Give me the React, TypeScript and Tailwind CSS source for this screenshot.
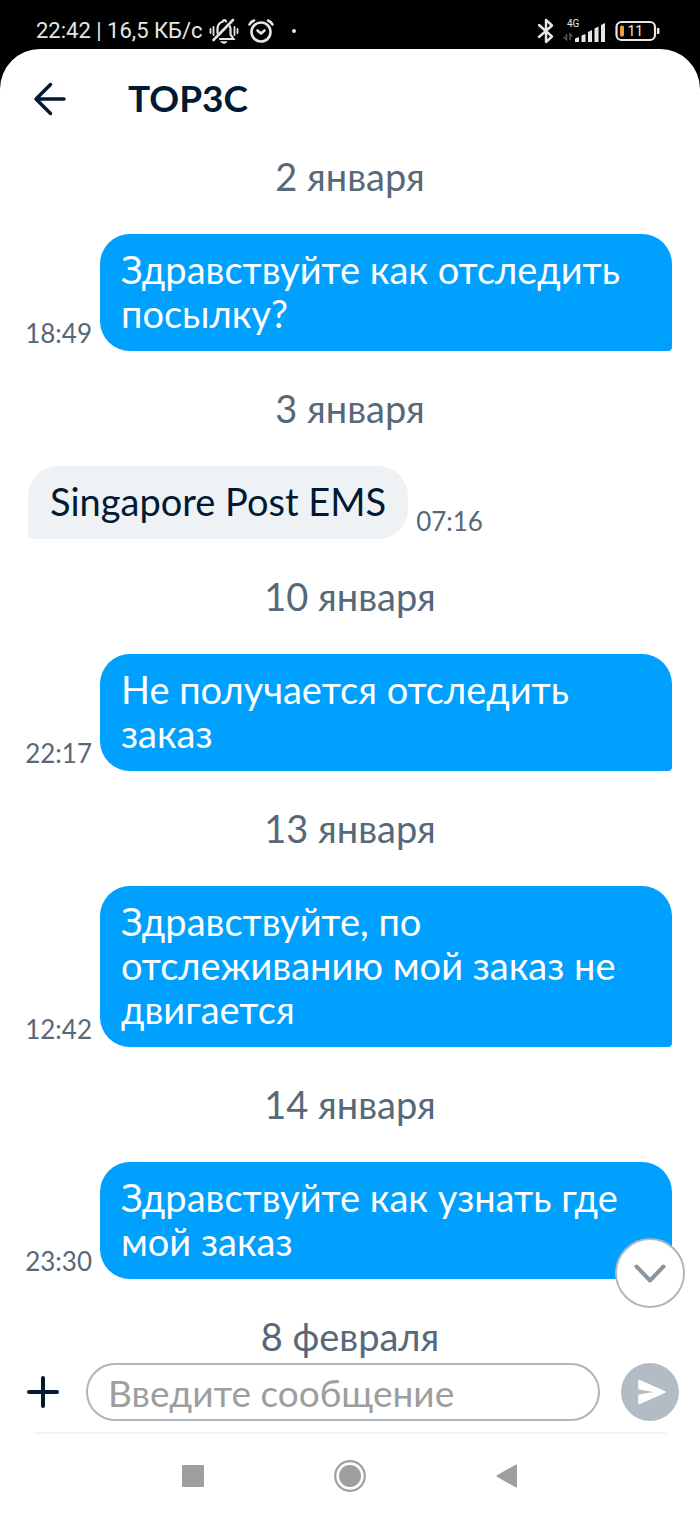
import React from 'react';

type Message = {
  date: string;
  time: string;
  text: string;
  mine: boolean;
};

const messages: Message[] = [
  { date: '2 января', time: '18:49', text: 'Здравствуйте как отследить\nпосылку?', mine: true },
  { date: '3 января', time: '07:16', text: 'Singapore Post EMS', mine: false },
  { date: '10 января', time: '22:17', text: 'Не получается отследить\nзаказ', mine: true },
  { date: '13 января', time: '12:42', text: 'Здравствуйте, по\nотслеживанию мой заказ не\nдвигается', mine: true },
  { date: '14 января', time: '23:30', text: 'Здравствуйте как узнать где\nмой заказ', mine: true },
];

const StatusBar: React.FC = () => (
  <div className="flex h-[49px] items-center justify-between pt-[13px] pr-[40px] pl-[36px] font-['Roboto',sans-serif] text-[#e6e6e6]">
    <div className="flex items-center">
      <span className="text-[22px] leading-7">22:42 | 16,5 КБ/с</span>
      {/* Muted bell */}
      <svg className="ml-1.5 h-7 w-[30px]" viewBox="0 0 30 28" fill="none" stroke="currentColor" strokeWidth="2.200" strokeLinecap="round">
        <path d="M1.500 12v4M4.500 10v8M25.500 10v8M28.500 12v4" strokeWidth="1.800" />
        <path d="M8.500 16v-4c0-3.500 2-6.300 5-7.200C14 2.500 16.500 2.500 17 4.500M21 9.500c.4 1 .5 2.300.5 3.500v4.500l3 4.500H11" />
        <path d="M24 3 4.500 23" strokeWidth="2.600" />
        <path d="M12 24.500h6c-.5 1.500-1.600 2-3 2s-2.500-.5-3-2z" fill="currentColor" strokeWidth="0.500" />
      </svg>
      {/* Alarm */}
      <svg className="ml-2 h-7 w-7" viewBox="0 0 28 28" fill="none" stroke="currentColor" strokeWidth="2.600" strokeLinecap="round" strokeLinejoin="round">
        <circle cx="14" cy="15" r="9.500" />
        <path d="m10.500 13.500 3.500 3 3.500-3" />
        <path d="M2.500 7.500c1-2 2.500-3.200 4.500-4M25.500 7.500c-1-2-2.500-3.200-4.500-4" />
      </svg>
      <span className="ml-[17px] h-1 w-1 rounded-full bg-current" />
    </div>
    <div className="flex items-center">
      {/* Bluetooth */}
      <svg className="h-7 w-[18px]" viewBox="0 0 18 28" fill="none" stroke="currentColor" strokeWidth="2.400" strokeLinejoin="round" strokeLinecap="round">
        <path d="m2 8 13 11.500L9 25V3l6 5.500L2 20" />
      </svg>
      <div className="ml-2 flex h-7 items-end">
        <svg className="mb-0.5 h-7 w-[46px]" viewBox="0 0 46 28" fill="currentColor">
          <text x="4" y="12" fontSize="10" >4G</text>
          <path d="M3.500 19v5.500L.8 22M7 25v-6l2.500 2.500" fill="none" stroke="#5a5a5a" strokeWidth="1.500" />
          <path d="M12 23.500 16 22v5h-4zM18.500 20.500l4-1.500v8h-4zM25 17l4-2v12h-4zM31.500 13.500l4-2V27h-4zM38 10l4-2v19h-4z" />
        </svg>
      </div>
      {/* Battery */}
      <svg className="ml-1.5 h-7 w-[45px]" viewBox="0 0 45 28">
        <rect x="1.500" y="5" width="38.500" height="18" rx="5" fill="none" stroke="currentColor" strokeWidth="2.200" />
        <rect x="5" y="8.500" width="4" height="11" rx="1.500" fill="#e8a030" />
        <path d="M42 11h1.500q1 0 1 1v4q0 1-1 1H42z" fill="currentColor" />
        <text x="12.500" y="19" fontSize="14" fill="currentColor">11</text>
      </svg>
    </div>
  </div>
);

const DateLabel: React.FC<{ children: React.ReactNode }> = ({ children }) => (
  <div className="text-center text-[38px] leading-[45px] text-[#576879]">{children}</div>
);

const Bubble: React.FC<{ message: Message }> = ({ message }) => {
  const { time, text, mine } = message;

  if (mine) {
    return (
      <div className="flex items-end pr-7">
        <time className="w-[100px] shrink-0 pr-2 pb-0.5 text-right text-[26px] leading-8 text-[#576879]">{time}</time>
        <p className="flex-1 rounded-[30px] rounded-br-[4px] bg-[#00a0ff] px-[21px] pt-[13px] pb-4 text-[38px] leading-[44px] whitespace-pre-line text-white">
          {text}
        </p>
      </div>
    );
  }

  return (
    <div className="flex items-end pl-7">
      <p className="rounded-[30px] rounded-bl-[4px] bg-[#eef2f5] px-[22px] pt-[13px] pb-4 text-[38px] leading-[44px] whitespace-pre-line text-[#001a34]">
        {text}
      </p>
      <time className="pb-0.5 pl-2 text-[26px] leading-8 text-[#576879]">{time}</time>
    </div>
  );
};

const App: React.FC = () => {
  return (
    <div className="min-h-screen bg-black font-['Lato','Open_Sans',sans-serif]">
      <StatusBar />

      <div className="rounded-t-[40px] bg-white">
        {/* Header */}
        <header className="flex h-[100px] items-center pl-[33px]">
          <button type="button" aria-label="Назад" className="text-[#001a34]">
            <svg className="h-[34px] w-[34px]" viewBox="0 0 34 34" fill="none" stroke="currentColor" strokeWidth="3.500" strokeLinecap="round" strokeLinejoin="round">
              <path d="M31 17H3M17.500 2.500 3 17l14.500 14.500" />
            </svg>
          </button>
          <h1 className="ml-[61px] pb-0.5 text-[37px] leading-[44px] font-bold text-[#001a34]">TOP3C</h1>
        </header>

        {/* Messages */}
        <main className="relative flex flex-col gap-[35px] pt-[5px]">
          {messages.map((message) => (
            <React.Fragment key={message.date}>
              <DateLabel>{message.date}</DateLabel>
              <Bubble message={message} />
            </React.Fragment>
          ))}
          <DateLabel>8 февраля</DateLabel>

          <button
            type="button"
            aria-label="Вниз"
            className="absolute right-[15px] bottom-[51px] flex h-[70px] w-[70px] items-center justify-center rounded-full border-2 border-[#adb6c0] bg-white text-[#8b959e]"
          >
            <svg className="h-5 w-8" viewBox="0 0 32 20" fill="none" stroke="currentColor" strokeWidth="4" strokeLinecap="round" strokeLinejoin="round">
              <path d="m2.500 3.500 13.500 14 13.500-14" />
            </svg>
          </button>
        </main>

        {/* Composer */}
        <form className="flex items-center pt-1 pr-[21px] pb-[11px] pl-[26px]">
          <button type="button" aria-label="Прикрепить" className="text-[#001a34]">
            <svg className="h-[34px] w-[34px]" viewBox="0 0 34 34" fill="none" stroke="currentColor" strokeWidth="4" strokeLinecap="round">
              <path d="M17 3v28M3 17h28" />
            </svg>
          </button>
          <input
            type="text"
            aria-label="Введите сообщение"
            placeholder="Введите сообщение"
            className="ml-[26px] h-[58px] min-w-0 flex-1 rounded-full border-2 border-[#adb6c0] px-5 text-[37px] leading-[44px] text-[#001a34] outline-none placeholder:text-[#9e9e9e]"
          />
          <button type="submit" aria-label="Отправить" className="ml-[21px] flex h-[58px] w-[58px] items-center justify-center rounded-full bg-[#b3bcc5] text-white">
            <svg className="ml-1 h-7 w-7" viewBox="0 0 28 28" fill="currentColor" stroke="currentColor" strokeWidth="1.500" strokeLinejoin="round">
              <path d="M1 2.500 27 14 1 25.500V17.200L20 14 1 10.800z" />
            </svg>
          </button>
        </form>

        {/* System navigation */}
        <div className="mx-[34px] h-0.5 bg-[#f3f3f3]" />
        <nav className="flex h-[83px] items-center justify-center gap-[130px] text-[#9f9f9f]">
          <button type="button" aria-label="Недавние" className="h-[22px] w-[22px] rounded-[1px] bg-current" />
          <button type="button" aria-label="Домой">
            <svg className="h-8 w-8" viewBox="0 0 32 32" fill="currentColor">
              <circle cx="16" cy="16" r="14.800" fill="none" stroke="currentColor" strokeWidth="2.200" />
              <circle cx="16" cy="16" r="11" />
            </svg>
          </button>
          <button type="button" aria-label="Назад в системе">
            <svg className="h-6 w-[22px]" viewBox="0 0 22 24" fill="currentColor" stroke="currentColor" strokeWidth="2" strokeLinejoin="round">
              <path d="M1.500 12 20 1.500v21z" />
            </svg>
          </button>
        </nav>
      </div>
    </div>
  );
};

export default App;
